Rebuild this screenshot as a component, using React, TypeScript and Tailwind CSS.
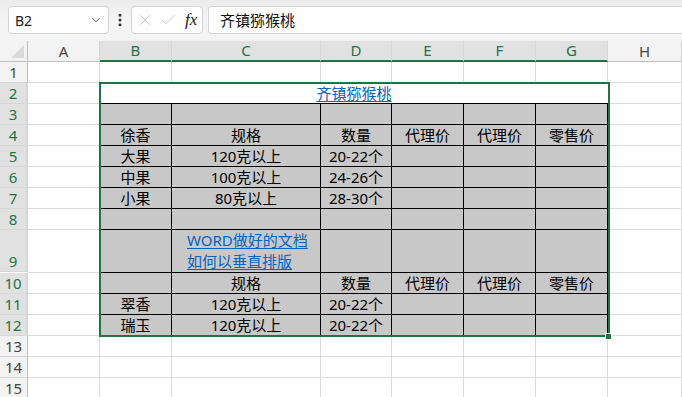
import { ChevronDown, EllipsisVertical, X, Check } from 'lucide-react';

const cols = ['A', 'B', 'C', 'D', 'E', 'F', 'G', 'H'];
const selCols = ['B', 'C', 'D', 'E', 'F', 'G'];
const green = 'border-[#217346]';

// table body rows 3..12, columns B..G
const body: Record<number, string[]> = {
  3: ['', '', '', '', '', ''],
  4: ['徐香', '规格', '数量', '代理价', '代理价', '零售价'],
  5: ['大果', '120克以上', '20-22个', '', '', ''],
  6: ['中果', '100克以上', '24-26个', '', '', ''],
  7: ['小果', '80克以上', '28-30个', '', '', ''],
  8: ['', '', '', '', '', ''],
  9: ['', '', '', '', '', ''],
  10: ['', '规格', '数量', '代理价', '代理价', '零售价'],
  11: ['翠香', '120克以上', '20-22个', '', '', ''],
  12: ['瑞玉', '120克以上', '20-22个', '', '', ''],
};

const font = { fontFamily: '"Noto Sans", "Noto Sans CJK SC", sans-serif' };

const RowHead = ({ n, tall }: { n: number; tall?: boolean }) => {
  const sel = n >= 2 && n <= 12;
  return (
    <div
      className={`flex items-end justify-center border-b border-[#d6d6d6] text-[15px] leading-[20px] ${
        tall ? 'h-[42px]' : 'h-[21px]'
      } ${sel ? `bg-[#e1e1e1] text-[#217346] border-r-2 ${green}` : 'bg-[#f3f3f3] text-[#444] border-r border-r-[#bfbfbf]'}`}
    >
      {n}
    </div>
  );
};

const Plain = () => <div className="border-r border-b border-[#dcdcdc] bg-white" />;

const Gray = ({ text }: { text: string }) => (
  <div className="flex items-end justify-center border-r border-b border-black bg-[#c8c8c8] text-[15px] leading-[20px] text-black whitespace-nowrap">
    {text}
  </div>
);

const App = () => {
  const rows = Array.from({ length: 15 }, (_, i) => i + 1);
  return (
    <div className="w-[682px] h-[397px] overflow-hidden bg-white" style={font}>
      {/* formula bar */}
      <div className="h-[41px] flex items-start pt-[6px] pl-[8px] bg-gradient-to-b from-[#ececec] via-[#f4f4f4] to-[#f4f4f4]">
        <div className="w-[101px] h-[28px] rounded-[4px] border border-[#d4d4d4] bg-white flex items-center justify-between pl-[6px] pr-[5px] text-[14px] text-[#222]">
          <span>B2</span>
          <ChevronDown size={14} strokeWidth={1.5} className="text-[#444]" />
        </div>
        <div className="w-[22px] h-[28px] flex items-center justify-center">
          <EllipsisVertical size={16} strokeWidth={2.5} className="text-[#333]" />
        </div>
        <div className="w-[72px] h-[28px] rounded-[4px] border border-[#d4d4d4] bg-white flex items-center pl-[4px] gap-[5px]">
          <X size={18} strokeWidth={1.2} className="text-[#c4c4c4]" />
          <Check size={18} strokeWidth={1.2} className="text-[#c4c4c4]" />
          <span className="ml-[3px] text-[17px] italic text-[#222]" style={{ fontFamily: '"Liberation Serif", serif' }}>
            fx
          </span>
        </div>
        <div className="ml-[5px] flex-1 h-[28px] rounded-l-[4px] border border-r-0 border-[#d4d4d4] bg-white flex items-center pl-[11px] text-[15px] text-[#111]">
          齐镇猕猴桃
        </div>
      </div>

      {/* sheet */}
      <div className="relative grid grid-cols-[28px_72px_72px_149px_71px_72px_72px_72px_74px]">
        {/* corner */}
        <div className="h-[21px] bg-[#f3f3f3] border-r border-b border-[#bfbfbf] relative">
          <div className="absolute right-[3px] bottom-[3px] w-0 h-0 border-l-[13px] border-l-transparent border-b-[13px] border-b-[#dadada]" />
        </div>
        {cols.map((c) => {
          const sel = selCols.includes(c);
          return (
            <div
              key={c}
              className={`h-[21px] flex items-center justify-center text-[15px] border-r border-r-[#d6d6d6] ${
                sel ? `bg-[#e1e1e1] text-[#217346] border-b-2 ${green}` : 'bg-[#f3f3f3] text-[#444] border-b border-b-[#bfbfbf]'
              }`}
            >
              {c}
            </div>
          );
        })}

        {rows.map((n) => {
          if (n === 2) {
            return [
              <RowHead key="h2" n={2} />,
              <Plain key="a2" />,
              <div
                key="b2"
                className="col-span-6 flex items-end justify-center border-b border-black bg-white text-[15px] leading-[20px]"
              >
                <span className="text-[#0563c1] underline underline-offset-2">齐镇猕猴桃</span>
              </div>,
              <Plain key="h2c" />,
            ];
          }
          if (body[n]) {
            return [
              <RowHead key={`h${n}`} n={n} tall={n === 9} />,
              <Plain key={`a${n}`} />,
              ...body[n].map((t, i) =>
                n === 9 && i === 1 ? (
                  <div
                    key={`c${n}${i}`}
                    className="flex flex-col justify-end pl-[15px] border-r border-b border-black bg-[#c8c8c8] text-[15px] leading-[21px] text-[#0563c1]"
                  >
                    <span className="underline underline-offset-2">WORD做好的文档</span>
                    <span className="underline underline-offset-2">如何以垂直排版</span>
                  </div>
                ) : (
                  <Gray key={`c${n}${i}`} text={t} />
                )
              ),
              <Plain key={`z${n}`} />,
            ];
          }
          return [
            <RowHead key={`h${n}`} n={n} />,
            ...cols.map((c) => <Plain key={`${c}${n}`} />),
          ];
        })}

        {/* selection */}
        <div className={`absolute left-[99px] top-[41px] w-[511px] h-[255px] border-2 ${green} pointer-events-none`} />
        <div className="absolute left-[605px] top-[292px] w-[7px] h-[7px] bg-[#217346] border border-white" />
      </div>
    </div>
  );
};

export default App;
